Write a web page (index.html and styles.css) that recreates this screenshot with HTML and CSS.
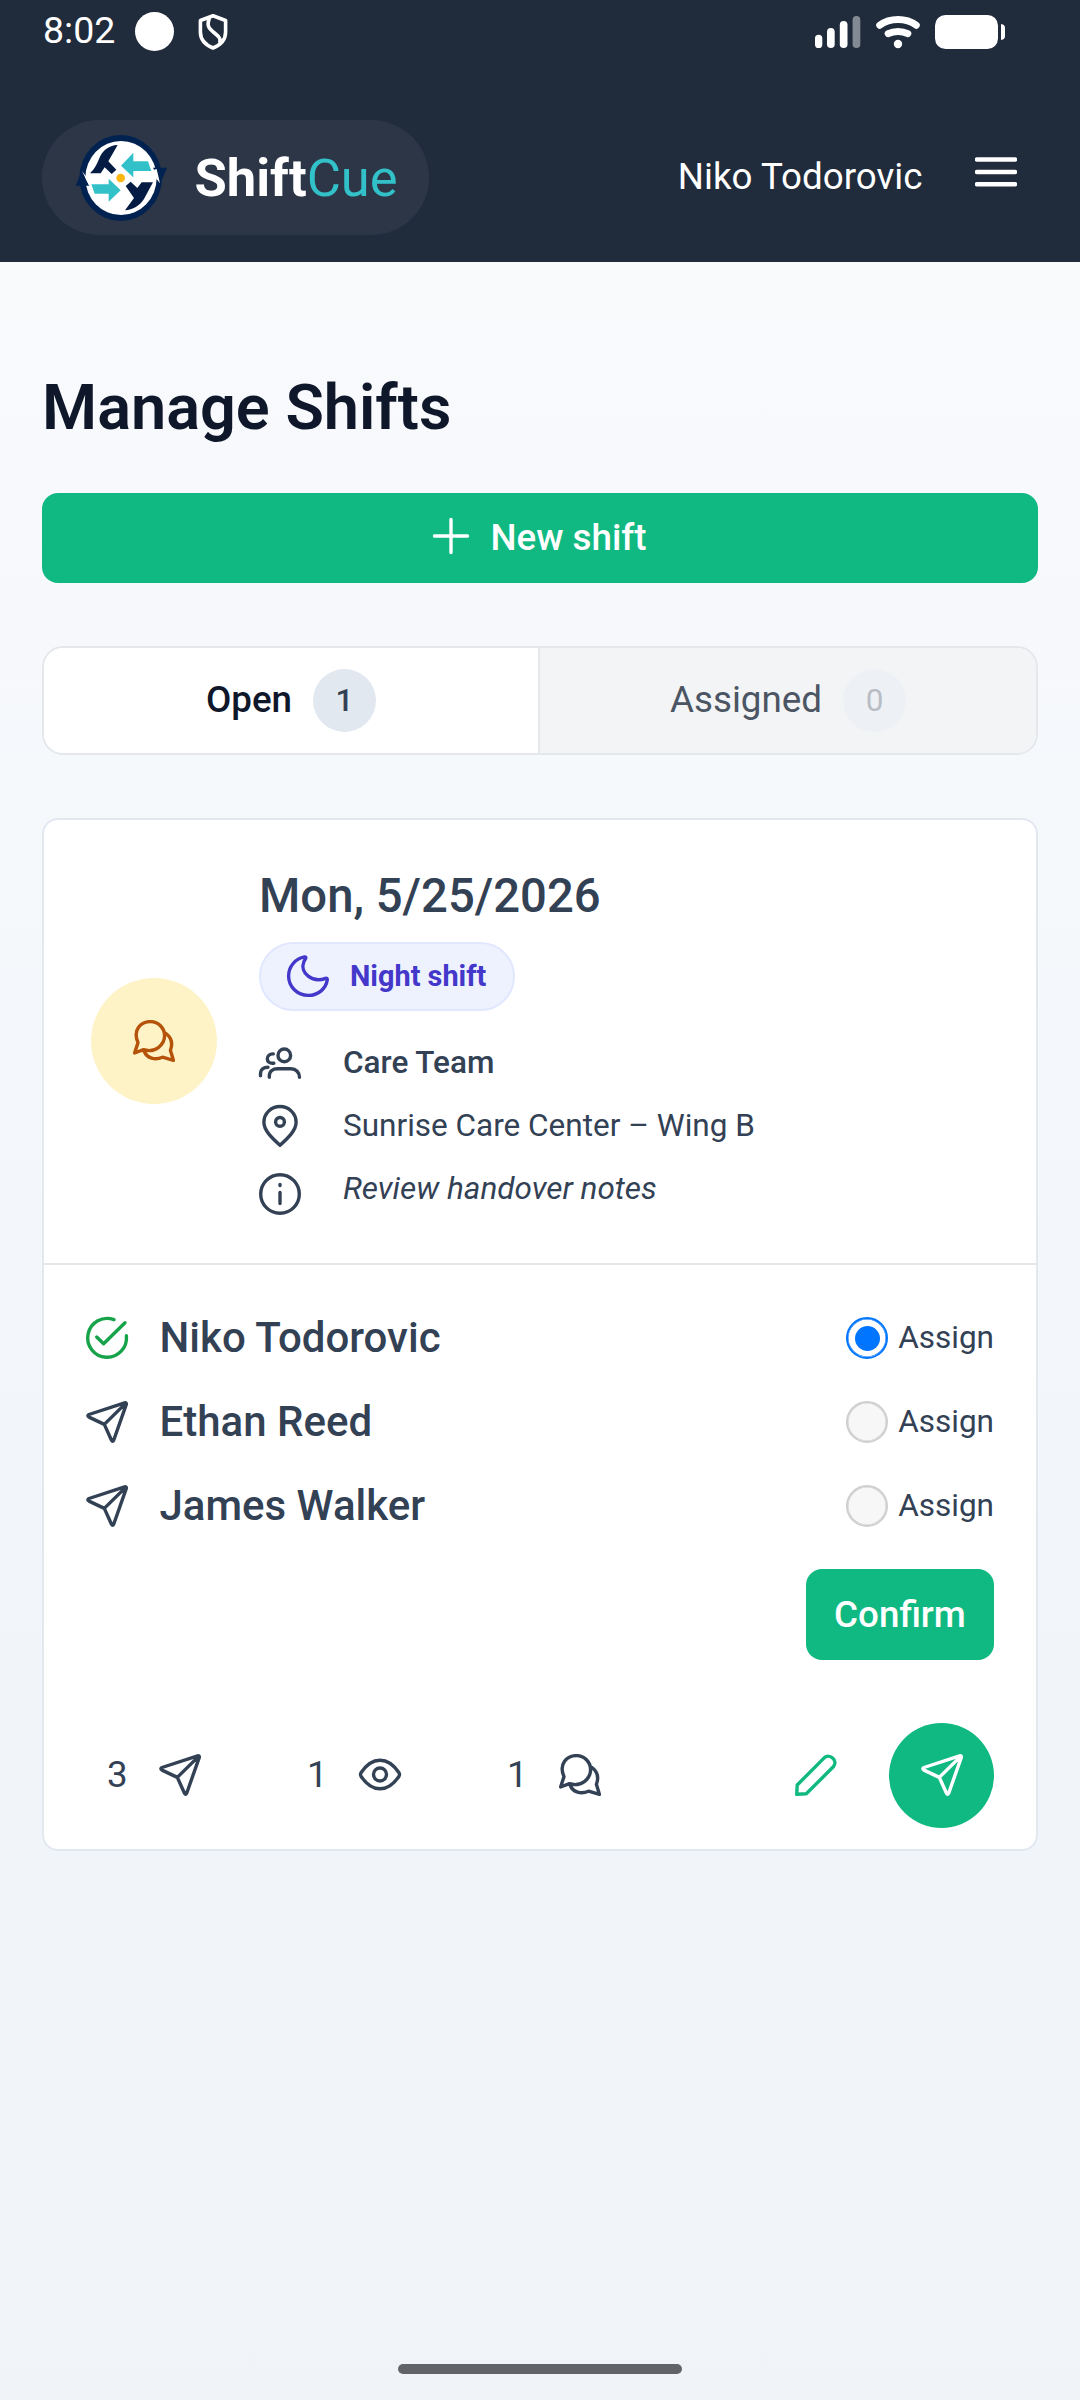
FILE: index.html
```
<!DOCTYPE html>
<html lang="en">
<head>
<meta charset="utf-8">
<title>ShiftCue – Manage Shifts</title>
<link rel="stylesheet" href="styles.css">
</head>
<body>
<svg class="sprite" aria-hidden="true">
  <symbol id="send" viewBox="0 0 42 42"><path d="M38.6 1.9 3 13.5Q.7 14.8 3 16.1L18.3 23.4 25.5 39.2Q26.6 41.3 27.7 39.2L40.3 3.4Q40.6 1.4 38.6 1.9ZM18.3 23.4 39.4 2.6"/></symbol>
  <symbol id="chat" viewBox="0 0 42 42"><path d="M1.6 33 5 22.6C-.7 9.5 8 1.6 17.6 1.6A14.2 14.2 0 0 1 31.6 15.6C31.6 25 22 33.300 10.500 29.700ZM33 13.500C38.800 18 39.800 24 37.400 30.300L40.400 40.300 29.500 37.200C22 40.400 14 38.300 11.300 31.500"/></symbol>
</svg>

<header class="header">
  <div class="status">
    <span class="time">8:02</span>
    <span class="dot"></span>
    <svg class="shield" width="32" height="36" viewBox="0 0 32 36"><path d="M16 1.800 28.600 6.500V18C28.600 25.500 23.500 31 16 34 8.500 31 3.400 25.500 3.400 18V6.500ZM12.500 4C9 12 12.500 15 17.500 19 22.500 23 24 25 22.500 29"/></svg>
    <span class="status-right">
      <svg width="46" height="34" viewBox="0 0 46 34"><g fill="#fff"><rect y="19.700" width="7.300" height="13.300" rx="3.600"/><rect x="12" y="13" width="7.700" height="20" rx="3.800"/><rect x="24.800" y="6" width="7.700" height="27" rx="3.800"/><rect x="37.600" y="1" width="7.700" height="32" rx="3.800" opacity=".45"/></g></svg>
      <svg width="44" height="34" viewBox="0 0 44 34"><g fill="none" stroke="#fff" stroke-width="7" stroke-linecap="round"><path d="M3.700 10.200C14 2.500 30 2.500 40.300 10.200M12.200 18.700C18 15.600 26 15.600 31.800 18.700"/></g><circle cx="22" cy="29" r="4.200" fill="#fff"/></svg>
      <svg width="70" height="34" viewBox="0 0 70 34"><g fill="#fff"><rect width="63" height="34" rx="10.500"/><path d="M66 9C69 9.500 70 10.500 70 13V21C70 23.500 69 24.500 66 25Z"/></g></svg>
    </span>
  </div>
  <div class="appbar">
    <div class="brand">
      <svg class="logo" width="92" height="87.300" viewBox="45 40 276 262">
        <ellipse cx="182" cy="172" rx="124" ry="129" fill="#002251"/>
        <ellipse cx="183" cy="172" rx="107" ry="111" fill="#fff"/>
        <path d="M47 195 65 152 88 195ZM279 141H321L302 187Z" fill="#002251"/>
        <path d="M66 151 80 170 100 160V192H86ZM272 150 290 145 300 188 276 158Z" fill="#fff"/>
        <path d="M183 135 220 96V122H264L274 151H220V170ZM182 209 146 174V191H94L104 219H146V243Z" fill="#33c1c9"/>
        <path d="M173 73C145 74 127 90 117 115 110 132 104 144 90 158H122L134 140 155 160 169 147 145 122ZM197 196 212 183 232 202 245 185H279L252 235C240 254 218 268 195 269L222 232Z" fill="#041c44"/>
        <circle cx="182" cy="172" r="13" fill="#fbb60f"/>
      </svg>
      <span class="brand-name">Shift<span class="brand-cue">Cue</span></span>
    </div>
    <span class="user">Niko Todorovic</span>
    <svg class="menu" width="42" height="30" viewBox="0 0 42 30"><path d="M2 2.500H40M2 15H40M2 27.300H40"/></svg>
  </div>
</header>

<main class="main">
  <h1 class="title">Manage Shifts</h1>
  <button class="btn new-shift"><svg class="icon plus" viewBox="0 0 42 42"><path d="M21 4.500V37.500M4.500 21H37.500"/></svg>New shift</button>

  <div class="tabs">
    <div class="tab active">Open<span class="badge">1</span></div>
    <div class="tab">Assigned<span class="badge muted">0</span></div>
  </div>

  <section class="card">
    <div class="summary">
      <div class="avatar"><svg class="icon"><use href="#chat"/></svg></div>
      <div class="details">
        <div class="date">Mon, 5/25/2026</div>
        <div class="chip"><svg class="icon" viewBox="0 0 42 42"><path d="M17.500 1.900C8.500 3.500 1.600 11.500 1.600 21A19.500 19.500 0 0 0 21.200 40.400C31.500 40.400 39 33.500 40.300 24.800 40.500 23.300 39.500 22.900 38.500 23.300 26 28.500 12 18 17 6.300L18.700 3.300C19.200 2.200 18.600 1.700 17.500 1.900Z"/></svg>Night shift</div>
        <ul class="facts">
          <li class="fact team"><svg class="icon" viewBox="0 0 42 42"><g transform="translate(0 5.500)"><ellipse cx="25.300" cy="7.900" rx="6.300" ry="6.400"/><path d="M14.300 6.400C6.200 6 6.200 17 14.800 15.700M10.300 29.700V28.500C10.300 23.500 14 21.300 18.500 21.300H32C37 21.300 40.500 25 40.500 29.700M1.500 28.300V26C1.500 22 4.500 19.700 9 19.700"/></g></svg>Care Team</li>
          <li class="fact"><svg class="icon" viewBox="0 0 42 42"><path d="M21 40.300C13 33 4.900 25.500 4.900 17.200A16.100 15.700 0 0 1 37.100 17.200C37.100 25.500 29 33 21 40.300Z"/><circle cx="21" cy="16.900" r="4.400"/></svg>Sunrise Care Center – Wing B</li>
          <li class="fact note"><svg class="icon" viewBox="0 0 42 42"><circle cx="21" cy="21" r="19.300"/><path d="M21 19.500V30.500M21 11.500V12.500"/></svg><em>Review handover notes</em></li>
        </ul>
      </div>
    </div>

    <div class="body">
      <div class="person"><svg class="icon ok" viewBox="0 0 42 42"><path d="M28 2.700A19.400 19.400 0 1 0 40.400 18.800M10.700 20 17.600 26.700 39 5.700"/></svg><span class="name">Niko Todorovic</span><span class="radio checked"></span><span class="assign">Assign</span></div>
      <div class="person"><svg class="icon"><use href="#send"/></svg><span class="name">Ethan Reed</span><span class="radio"></span><span class="assign">Assign</span></div>
      <div class="person"><svg class="icon"><use href="#send"/></svg><span class="name">James Walker</span><span class="radio"></span><span class="assign">Assign</span></div>
      <button class="btn confirm">Confirm</button>
      <div class="footer">
        <div class="stat">3<svg class="icon"><use href="#send"/></svg></div>
        <div class="stat">1<svg class="icon" viewBox="0 0 42 42"><path d="M2 22.200Q1 20.500 2 18.800C13 2 29 2 40 18.800Q41 20.500 40 22.200C29 39 13 39 2 22.200Z"/><circle cx="21" cy="20.500" r="6.500"/></svg></div>
        <div class="stat">1<svg class="icon"><use href="#chat"/></svg></div>
        <svg class="icon edit" viewBox="0 0 42 42"><path d="M1.700 40.300 2.200 31 29.200 3.900C35 -1 43.500 6.500 38.300 12.800L11.300 39.800Z"/></svg>
        <div class="send-btn"><svg class="icon"><use href="#send"/></svg></div>
      </div>
    </div>
  </section>
</main>
<div class="home-bar"></div>
</body>
</html>
```
FILE: styles.css
```
* { box-sizing: border-box; }
body {
  margin: 0;
  width: 1080px;
  height: 2400px;
  display: flex;
  flex-direction: column;
  font-family: Roboto, sans-serif;
  font-size: 36.75px;
  color: #334155;
  background: linear-gradient(#f9fafc 262px, #f7f8fc 640px, #f5f9fc 780px, #f1f5f9 1850px, #f0f4f9);
}
.sprite { display: none; }
.icon {
  width: 42px;
  height: 42px;
  flex: none;
  overflow: visible;
  fill: none;
  stroke: currentColor;
  stroke-width: 3.4;
  stroke-linecap: round;
  stroke-linejoin: round;
}

.header { height: 262px; background: #202b3c; color: #fff; }
.status { height: 63px; padding: 0 75px 0 43px; display: flex; align-items: center; }
.time { width: 92px; font-size: 37.5px; line-height: 61px; height: 63px; }
.dot { width: 39px; height: 39px; border-radius: 50%; background: #fff; }
.shield { margin-left: 23px; fill: none; stroke: #fff; stroke-width: 3.6; stroke-linejoin: round; }
.status-right { margin-left: auto; display: flex; gap: 15px; }
.status-right svg { display: block; }
.appbar { padding: 57px 63px 27px 42px; display: flex; align-items: center; }
.brand {
  width: 387px;
  height: 115px;
  padding-left: 33px;
  border-radius: 58px;
  background: #2c3647;
  display: flex;
  align-items: center;
  gap: 27.5px;
}
.brand-name { font-size: 52.5px; font-weight: 700; line-height: 62px; }
.brand-cue { font-weight: 400; color: #33c1c9; }
.user { margin: 0 0 2px auto; line-height: 46px; }
.menu { margin: 0 0 12px 52.5px; fill: none; stroke: #fff; stroke-width: 4.5; stroke-linecap: round; }

.main { padding: 108px 42px 0; flex: 1; }
.title { margin: 0 0 47px; font-size: 63px; font-weight: 600; line-height: 76px; color: #0f172a; }
.btn {
  display: flex;
  align-items: center;
  justify-content: center;
  border: 0;
  border-radius: 16px;
  background: #10b981;
  color: #fff;
  font: 500 36.75px/46px Roboto, sans-serif;
}
.new-shift { width: 100%; height: 90px; gap: 18px; padding: 0 3px 0 0; }
.plus { margin-bottom: 4px; }

.tabs {
  height: 109px;
  margin-top: 63px;
  display: grid;
  grid-template-columns: 496px 1fr;
  border: 2px solid #e5e7eb;
  border-radius: 21px;
  overflow: hidden;
}
.tab {
  display: flex;
  align-items: center;
  justify-content: center;
  gap: 21px;
  line-height: 46px;
  padding-bottom: 2px;
  background: #f3f4f6;
  color: #4b5563;
}
.tab.active { background: #fff; color: #0f172a; font-weight: 500; border-right: 2px solid #e5e7eb; }
.badge {
  width: 63px;
  height: 63px;
  margin-top: 2px;
  border-radius: 50%;
  background: #e2e8f0;
  color: #334155;
  font-size: 31.5px;
  line-height: 63px;
  text-align: center;
}
.badge.muted { opacity: .3; }

.card {
  margin-top: 63px;
  border: 2px solid #e2e8f0;
  border-radius: 16px;
  background: #fff;
}
.summary { padding: 48px 47px 43px; display: flex; gap: 42px; border-bottom: 2px solid #e5e7eb; }
.avatar {
  width: 126px;
  height: 126px;
  margin-bottom: 6px;
  align-self: center;
  display: flex;
  align-items: center;
  justify-content: center;
  border-radius: 50%;
  background: #fef3c7;
  color: #b45309;
}
.date { font-size: 47.25px; font-weight: 500; line-height: 56px; }
.chip {
  width: 256px;
  height: 69px;
  margin-top: 18px;
  padding: 0 0 2px 26px;
  display: flex;
  align-items: center;
  gap: 21px;
  border: 2px solid #e0e7ff;
  border-radius: 35px;
  background: #eef2ff;
  color: #4338ca;
  font-size: 28.875px;
  font-weight: 700;
  line-height: 36px;
  white-space: nowrap;
}
.facts { margin: 20px 0 0; padding: 0; list-style: none; font-size: 31.5px; }
.fact { height: 63px; display: flex; align-items: center; gap: 42px; }
.team { font-weight: 500; }
.note .icon { margin-top: 10px; }

.body { padding: 31px 42px 21px; }
.person { height: 84px; display: flex; align-items: center; }
.ok { color: #16a34a; }
.name { margin: 0 auto 0 31.5px; font-size: 42px; font-weight: 500; line-height: 50px; }
.radio {
  width: 42px;
  height: 42px;
  border: 2px solid #cfcfcf;
  border-radius: 50%;
  background: #f7f7f7;
  box-shadow: inset 0 0 0 .5px #cfcfcf;
}
.radio.checked {
  border-color: #0075ff;
  padding: 6.5px;
  background: #0075ff content-box;
  box-shadow: inset 0 0 0 .5px #0075ff;
}
.assign { margin-left: 10.5px; font-size: 31.5px; line-height: 40px; }
.confirm { width: 188px; height: 91px; margin: 21px 0 63px auto; padding: 0; }
.footer { height: 105px; display: flex; align-items: center; }
.stat {
  width: 200px;
  padding: 0 0 1px 21px;
  display: flex;
  align-items: center;
  gap: 31px;
  line-height: 46px;
}
.edit { margin: 0 0 1px auto; color: #10b981; }
.send-btn {
  width: 105px;
  height: 105px;
  margin-left: 52px;
  padding-bottom: 1px;
  display: flex;
  align-items: center;
  justify-content: center;
  border-radius: 50%;
  background: #10b981;
  color: #fff;
}
.home-bar { width: 284px; height: 10px; margin: 0 auto 26px; border-radius: 5px; background: #616366; }
```
